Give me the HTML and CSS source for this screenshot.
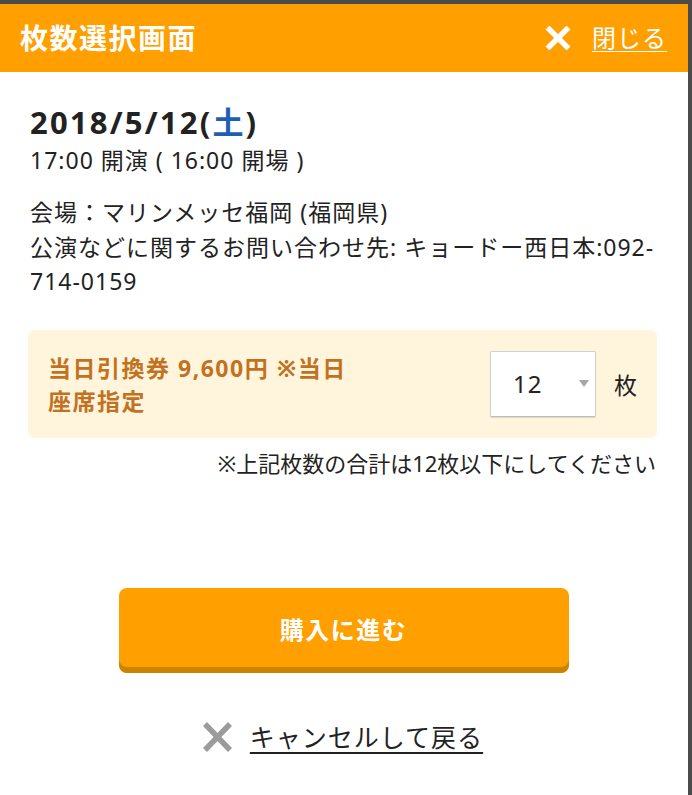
FILE: index.html
```html
<!DOCTYPE html>
<html lang="ja">
<head>
<meta charset="utf-8">
<link rel="stylesheet" href="styles.css">
</head>
<body>
<div class="modal">
  <header class="head">
    <h1 class="title">枚数選択画面</h1>
    <a class="close" href="#">
      <svg class="close-x" width="26" height="24" viewBox="0 0 26 24"><path d="M2.5 1.5 L23.5 22.5 M23.5 1.5 L2.5 22.5" stroke="#fff" stroke-width="5.5"/></svg>
      <span class="close-text">閉じる</span>
    </a>
  </header>
  <main class="body">
    <div class="date">2018/5/12(<span class="sat">土</span>)</div>
    <div class="time">17:00 開演 ( 16:00 開場 )</div>
    <div class="info">
      <p>会場：マリンメッセ福岡 (福岡県)</p>
      <p>公演などに関するお問い合わせ先: キョードー西日本:092-<br>714-0159</p>
    </div>
    <div class="ticket">
      <div class="ticket-label">当日引換券 9,600円 ※当日<br>座席指定</div>
      <div class="ticket-qty">
        <div class="select"><span class="select-val">12</span><span class="select-arrow"></span></div>
        <span class="unit">枚</span>
      </div>
    </div>
    <p class="note">※上記枚数の合計は12枚以下にしてください</p>
    <div class="actions">
      <button class="buy">購入に進む</button>
      <a class="cancel" href="#">
        <svg class="cancel-x" width="31" height="32" viewBox="0 0 31 32"><path d="M3 3 L28 29 M28 3 L3 29" stroke="#9b9b9b" stroke-width="5.5"/></svg>
        <span class="cancel-text">キャンセルして戻る</span>
      </a>
    </div>
  </main>
</div>
</body>
</html>
```
FILE: styles.css
```css
* { box-sizing: border-box; }
html, body { margin: 0; padding: 0; }
body {
  background: #4b4b4b;
  font-family: "Noto Sans", "Noto Sans CJK JP", sans-serif;
  color: #222;
  width: 692px;
  height: 795px;
  overflow: hidden;
  padding-top: 4px;
}
.modal {
  width: 688px;
  height: 791px;
  background: #fff;
}
.head {
  height: 68px;
  background: #ffa000;
  display: flex;
  align-items: center;
  justify-content: space-between;
  padding: 0 21px 0 20px;
}
.title {
  margin: 0;
  color: #fff;
  font-size: 28px;
  font-weight: 700;
  letter-spacing: 1.5px;
  line-height: 40px;
}
.close {
  display: flex;
  align-items: center;
  gap: 21px;
  color: #fff;
  text-decoration: none;
}
.close-x { display: block; }
.close-text {
  font-size: 24px;
  letter-spacing: 1px;
  line-height: 34px;
  text-decoration: underline;
  text-decoration-thickness: 1px;
  text-underline-offset: 4px;
}
.body {
  padding: 28px 31px 0 30px;
}
.date {
  font-size: 31px;
  font-weight: 700;
  line-height: 44px;
  letter-spacing: 2.2px;
}
.sat { color: #1e5fb4; }
.time {
  font-size: 23px;
  line-height: 34px;
  letter-spacing: 1px;
  margin-top: -1px;
}
.info { margin-top: 18px; }
.info p {
  margin: 0;
  font-size: 23px;
  line-height: 34.5px;
  letter-spacing: 1px;
}
.ticket {
  margin: 31px 0 0 -2px;
  background: #fff4dc;
  border-radius: 7px;
  height: 108px;
  display: flex;
  align-items: center;
  justify-content: space-between;
  padding: 0 20px 0 20px;
}
.ticket-label {
  color: #c2721f;
  font-weight: 700;
  font-size: 23px;
  line-height: 33px;
  letter-spacing: 1.5px;
  padding-top: 2px;
}
.ticket-qty {
  display: flex;
  align-items: center;
  gap: 18px;
}
.select {
  width: 106px;
  height: 66px;
  background: #fff;
  border: 1px solid #cfcfcf;
  border-bottom-color: #bdbdbd;
  border-radius: 2px;
  box-shadow: 0 1px 1px rgba(0,0,0,0.12);
  display: flex;
  align-items: center;
  justify-content: space-between;
  padding: 0 6px 0 22px;
}
.select-val { font-size: 24px; letter-spacing: 1px; }
.select-arrow {
  width: 0; height: 0;
  border-left: 5px solid transparent;
  border-right: 5px solid transparent;
  border-top: 7px solid #a6a6a6;
  margin-right: 0;
}
.unit { font-size: 23px; }
.note {
  margin: 10px 0 0;
  text-align: right;
  font-size: 22px;
  line-height: 30px;
  padding-right: 1px;
}
.actions {
  display: flex;
  flex-direction: column;
  align-items: center;
}
.buy {
  margin-top: 110px;
  width: 450px;
  height: 85px;
  border: none;
  border-radius: 8px;
  background: #ffa000;
  box-shadow: inset 0 -6px 0 #c98400;
  color: #fff;
  font-family: inherit;
  font-size: 24px;
  font-weight: 700;
  letter-spacing: 1.5px;
  padding-bottom: 4px;
}
.cancel {
  margin-top: 46px;
  display: flex;
  align-items: center;
  gap: 17px;
  color: #222;
  text-decoration: none;
  margin-left: -2px;
}
.cancel-x { display: block; }
.cancel-text {
  font-size: 25px;
  letter-spacing: 1px;
  line-height: 36px;
  text-decoration: underline;
  text-decoration-thickness: 1.5px;
  text-underline-offset: 5px;
}
```
